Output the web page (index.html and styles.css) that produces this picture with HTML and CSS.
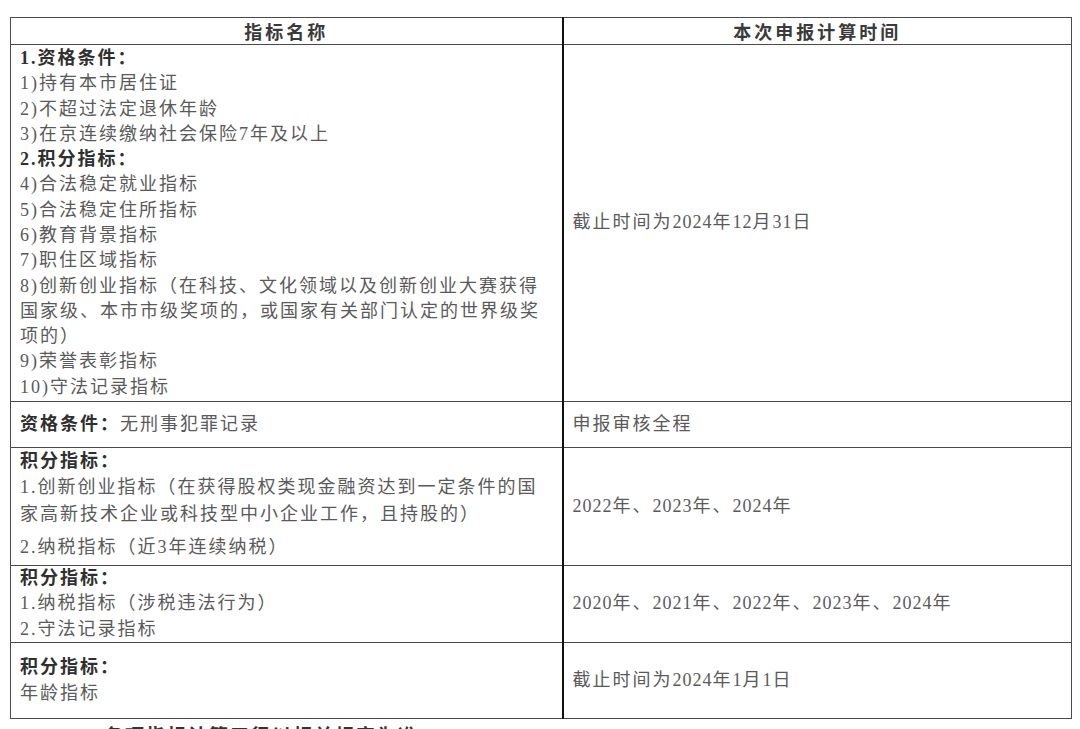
FILE: index.html
```html
<!DOCTYPE html>
<html lang="zh-CN">
<head>
<meta charset="utf-8">
<title>指标名称与本次申报计算时间</title>
<link rel="stylesheet" href="styles.css">
</head>
<body>
<table class="grid">
  <colgroup><col class="col-name"><col class="col-time"></colgroup>
  <thead>
    <tr class="r-head"><th>指标名称</th><th class="mid">本次申报计算时间</th></tr>
  </thead>
  <tbody>
    <tr class="r1">
      <td class="name">
        <div class="lbl">1.资格条件：</div>
        <div>1)持有本市居住证</div>
        <div>2)不超过法定退休年龄</div>
        <div>3)在京连续缴纳社会保险7年及以上</div>
        <div class="lbl">2.积分指标：</div>
        <div>4)合法稳定就业指标</div>
        <div>5)合法稳定住所指标</div>
        <div>6)教育背景指标</div>
        <div>7)职住区域指标</div>
        <div>8)创新创业指标（在科技、文化领域以及创新创业大赛获得<br>国家级、本市市级奖项的，或国家有关部门认定的世界级奖<br>项的）</div>
        <div>9)荣誉表彰指标</div>
        <div>10)守法记录指标</div>
      </td>
      <td class="time mid">截止时间为<span class="num">2024</span>年<span class="num">12</span>月<span class="num">31</span>日</td>
    </tr>
    <tr class="r2">
      <td class="name"><span class="lbl">资格条件：</span>无刑事犯罪记录</td>
      <td class="time mid">申报审核全程</td>
    </tr>
    <tr class="r3">
      <td class="name">
        <div class="lbl">积分指标：</div>
        <div class="wide">1.创新创业指标（在获得股权类现金融资达到一定条件的国<br>家高新技术企业或科技型中小企业工作，且持股的）</div>
        <div class="gap">2.纳税指标（近3年连续纳税）</div>
      </td>
      <td class="time mid"><span class="num">2022</span>年、<span class="num">2023</span>年、<span class="num">2024</span>年</td>
    </tr>
    <tr class="r4">
      <td class="name">
        <div class="lbl">积分指标：</div>
        <div>1.纳税指标（涉税违法行为）</div>
        <div>2.守法记录指标</div>
      </td>
      <td class="time mid"><span class="num">2020</span>年、<span class="num">2021</span>年、<span class="num">2022</span>年、<span class="num">2023</span>年、<span class="num">2024</span>年</td>
    </tr>
    <tr class="r5">
      <td class="name">
        <div class="lbl">积分指标：</div>
        <div>年龄指标</div>
      </td>
      <td class="time mid">截止时间为<span class="num">2024</span>年<span class="num">1</span>月<span class="num">1</span>日</td>
    </tr>
  </tbody>
</table>
<p class="after">各项指标计算口径以相关规定为准</p>
</body>
</html>
```

FILE: styles.css
```css
html, body {
  margin: 0;
  padding: 0;
  background: #ffffff;
}

body {
  font-family: "Liberation Serif", "Noto Sans CJK SC", serif;
  color: #5a5a5a;
  overflow: hidden;
}

.grid {
  margin: 17px 0 0 10px;
  width: 1061px;
  border-collapse: collapse;
  table-layout: fixed;
}

.col-name { width: 552px; }
.col-time { width: 509px; }

.grid th,
.grid td {
  border: 1px solid #4a4a4a;
  padding: 0 8px 0 9px;
  vertical-align: middle;
}

.grid .mid {
  border-left: 2px solid #111111;
}

.grid th {
  font-family: "Noto Sans CJK SC", sans-serif;
  font-weight: 700;
  font-size: 18px;
  letter-spacing: 3px;
  color: #3a3a3a;
  text-align: center;
  line-height: 24px;
  padding: 0;
}

.r-head { height: 27px; }
.r1 { height: 357px; }
.r2 { height: 46px; }
.r3 { height: 118px; }
.r4 { height: 77px; }
.r5 { height: 76px; }

.name,
.time {
  font-size: 18px;
  letter-spacing: 2px;
  line-height: 25.3px;
  font-weight: 400;
  text-align: left;
}

.num {
  letter-spacing: 1px;
}

.lbl {
  font-weight: 700;
  color: #2f2f2f;
}

.r3 .name {
  vertical-align: top;
  padding-top: 1px;
}

.wide {
  line-height: 26.5px;
}

.gap {
  margin-top: 8px;
}

.after {
  margin: 4px 0 0 104px;
  font-family: "Noto Sans CJK SC", sans-serif;
  font-weight: 700;
  font-size: 19px;
  letter-spacing: 2px;
  line-height: 24px;
  color: #333333;
}
```
